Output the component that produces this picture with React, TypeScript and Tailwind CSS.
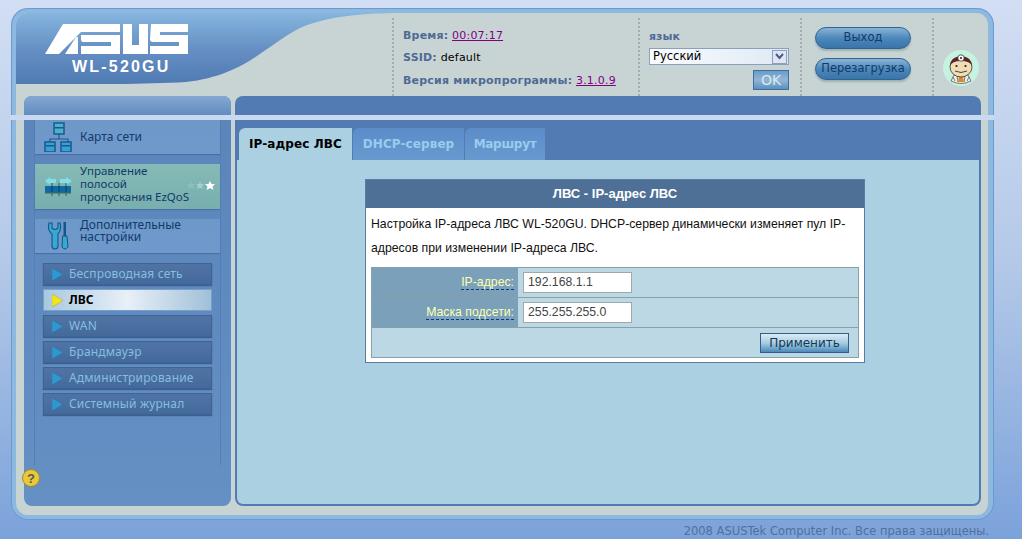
const verdana = "font-['DejaVu_Sans',sans-serif]"

const subMenu = ["Беспроводная сеть", "ЛВС", "WAN", "Брандмауэр", "Администрирование", "Системный журнал"]

const AsusLogo = () => (
  <svg width="143" height="30" viewBox="0 0 143 30" fill="white">
    <path d="M0 30 L18 0 H75 V8 H36 L14 30 Z" />
    <path d="M20 30 L31 13 H33 V30 Z" />
    <path d="M36 11 H75 V30 H36 V22 H66 V18 H38 Q36 18 36 15 Z" />
    <path d="M78 0 H87 V21 H94 V0 H103 V30 H78 Z" />
    <path d="M106 0 H143 V8 H115 V11 H143 V30 H105 V22 H134 V18 H108 Q105 18 105 15 Z" />
  </svg>
)

const Wave = () => (
  <svg className="absolute left-0 top-0" width="400" height="71" viewBox="0 0 400 71">
    <defs>
      <linearGradient id="wave" x1="0" y1="0" x2="0" y2="1">
        <stop offset="0" stopColor="#86b5df" />
        <stop offset="0.5" stopColor="#6690c4" />
        <stop offset="1" stopColor="#4f7ab3" />
      </linearGradient>
    </defs>
    <path d="M0 0 H400 C360 0 320 0 284 15 C250 32 230 62 170 69 C120 72 40 71 0 71 Z" fill="url(#wave)" />
  </svg>
)

const Avatar = () => (
  <svg width="36" height="36" viewBox="0 0 36 36">
    <circle cx="18" cy="18" r="18" fill="#c6f2e0" />
    <path d="M8 31 L11 25 H25 L28 31 Q18 36 8 31 Z" fill="#f0f2e4" stroke="#444" strokeWidth="0.7" />
    <path d="M10 27 L12 31 M14 26 L15 32 M22 26 L21 32 M26 27 L24 31" stroke="#444" strokeWidth="0.7" />
    <path d="M16 26 H20 L21 32 H15 Z" fill="#d98a2c" />
    <ellipse cx="18" cy="17" rx="11" ry="10" fill="#f2dcb4" stroke="#333" strokeWidth="0.8" />
    <path d="M7 16 Q7 7 18 6 Q29 7 29 16 Q27 11 18 11 Q9 11 7 16 Z" fill="#5a2428" />
    <circle cx="18" cy="8" r="3.2" fill="white" stroke="#333" strokeWidth="0.8" />
    <circle cx="18" cy="8" r="1.1" fill="#333" />
    <circle cx="13.5" cy="16" r="1.1" fill="#222" />
    <circle cx="22.5" cy="16" r="1.1" fill="#222" />
    <path d="M12 21 Q18 24 24 21" stroke="#333" strokeWidth="0.9" fill="none" />
  </svg>
)

const NetworkIcon = () => (
  <svg width="30" height="30" viewBox="0 0 30 30">
    <path d="M15 12 V17 M6 22 V17 H24 V22" stroke="#1d5a92" strokeWidth="1.2" fill="none" />
    <rect x="10" y="1" width="10" height="11" fill="#4fb0c8" stroke="#145a96" strokeWidth="1.5" />
    <rect x="10.5" y="5" width="9" height="1.5" fill="#145a96" />
    <rect x="1" y="20" width="10" height="10" fill="#3aa0cc" stroke="#145a96" strokeWidth="1.5" />
    <rect x="1.5" y="23" width="9" height="1.5" fill="#145a96" />
    <rect x="17" y="20" width="10" height="10" fill="#3aa0cc" stroke="#145a96" strokeWidth="1.5" />
    <rect x="17.5" y="23" width="9" height="1.5" fill="#145a96" />
  </svg>
)

const QosIcon = () => (
  <svg width="28" height="20" viewBox="0 0 28 20">
    <path d="M0 4 L5 0 V2 H11 V6 H5 V8 Z M27 4 L21 0 V2 H15 V6 H21 V8 Z" fill="#7fe0ea" />
    <path d="M7 6 V19 M14 6 V19 M21 6 V19" stroke="#3a5a50" strokeWidth="1" />
    <rect x="0" y="9" width="26" height="6" fill="#0f6aa0" />
    <rect x="0" y="15" width="26" height="1.5" fill="#2c6a70" />
    <path d="M7 9 V15 M14 9 V15 M21 9 V15" stroke="#0a3f70" strokeWidth="1" />
  </svg>
)

const ToolsIcon = () => (
  <svg width="22" height="28" viewBox="0 0 22 28">
    <path d="M2 1 Q0 8 5 12 V24 Q5 27 8 27 Q11 27 11 24 V12 Q15 8 13 1 L11 1 V6 Q8 9 5 6 V1 Z" fill="#38a8d0" stroke="#12558c" strokeWidth="1.1" />
    <rect x="16.5" y="0" width="2.5" height="14" fill="#12558c" />
    <path d="M15.5 14 H20 L21 25 Q18 29 15 25 Z" fill="#38a8d0" stroke="#12558c" strokeWidth="1" />
  </svg>
)

const Stars = () => (
  <svg width="28" height="10" viewBox="0 0 28 10" className="absolute right-[5px] top-[17px]">
    <path d="M4 0 L5 3 L8 3 L6 5 L7 8 L4 6.5 L1 8 L2 5 L0 3 L3 3 Z" fill="#8cc0be" />
    <path d="M13 0 L14 3 L17 3 L15 5 L16 8 L13 6.5 L10 8 L11 5 L9 3 L12 3 Z" fill="#a4d0ce" />
    <path d="M23 0 L24.5 3 L28 3 L25.5 5.5 L26.5 9 L23 7 L19.5 9 L20.5 5.5 L18 3 L21.5 3 Z" fill="#ffffff" />
  </svg>
)

const Arrow = ({ active }: { active: boolean }) => (
  <svg width="11" height="13" viewBox="0 0 11 13" className="shrink-0">
    <path d="M0 0 L11 6.5 L0 13 Z" fill={active ? "#f4e41c" : "#2a9ad0"} stroke={active ? "#b8a030" : "#3a6fa8"} strokeWidth="0.5" />
  </svg>
)

const HelpIcon = () => (
  <svg width="18" height="18" viewBox="0 0 18 18">
    <circle cx="9" cy="9" r="8.5" fill="#e8c83c" stroke="#a88a20" />
    <text x="9" y="13.5" textAnchor="middle" fontSize="13" fontWeight="700" fill="#5a5a50" fontFamily="Liberation Sans">?</text>
  </svg>
)

const Sidebar = () => (
  <div className="w-[207px] flex flex-col rounded-t-lg rounded-b-lg relative bg-gradient-to-b from-[#5a84ba] to-[#6490c4]">
    <div className="h-[24px] rounded-t-lg bg-gradient-to-b from-[#84a8d2] to-[#5a84ba]"></div>
    <div className="mx-[10px] h-[345px] border-x border-[#557fb4]">
      <div className="h-[34px] flex items-center bg-gradient-to-b from-[#6c98c8] to-[#7199cb] shadow-[0_1px_1px_#4a70a4]">
        <div className="w-[45px] pl-[9px] flex justify-start"><NetworkIcon /></div>
        <span className="text-[12px] text-[#123a6a]">Карта сети</span>
      </div>
      <div className="mt-[10px] h-[45px] flex items-center relative bg-gradient-to-b from-[#85bab6] to-[#78aeae] shadow-[0_1px_1px_#4a70a4]">
        <div className="w-[45px] pl-[10px] flex justify-start"><QosIcon /></div>
        <span className="text-[11.5px] leading-[13px] text-[#123a6a] whitespace-nowrap -mt-[6px]">Управление<br />полосой<br />пропускания EzQoS</span>
        <Stars />
      </div>
      <div className="mt-[10px] h-[34px] flex items-center bg-gradient-to-b from-[#6c98c8] to-[#7199cb] shadow-[0_1px_1px_#4a70a4]">
        <div className="w-[45px] pl-[12px] flex justify-start"><ToolsIcon /></div>
        <span className="text-[12px] leading-[12px] text-[#123a6a] -mt-[10px]">Дополнительные<br />настройки</span>
      </div>
      <div className="mt-[10px] mx-[8px] flex flex-col gap-[4px]">
        {subMenu.map((item) => {
          const active = item === "ЛВС"
          return (
            <div
              key={item}
              className={
                active
                  ? "h-[22px] flex items-center gap-[6px] pl-[8px] text-[12px] font-bold text-black bg-gradient-to-r from-[#a8c8e0] via-[#e8f0f8] to-[#a0c0d8] border border-[#7aa0c8]"
                  : "h-[22px] flex items-center gap-[6px] pl-[8px] text-[12px] tracking-[0.15px] text-[#86bee0] bg-gradient-to-b from-[#4f74a4] to-[#446a9c] border border-[#3f6494] shadow-[0_1px_1px_#3a5f90]"
              }
            >
              <Arrow active={active} />
              {item}
            </div>
          )
        })}
      </div>
    </div>
    <div className="absolute left-[-2px] top-[373px]"><HelpIcon /></div>
  </div>
)

const MainPanel = () => (
  <div className="flex-1 flex flex-col bg-[#517bb2] rounded-t-lg rounded-b-lg px-[2px] pb-[2px]">
    <div className="h-[32px] shrink-0"></div>
    <div className={`h-[32px] shrink-0 flex items-end pl-[2px] gap-[1px] ${verdana} text-[12px] font-bold`}>
      <div className="h-[32px] w-[113px] flex items-center justify-center bg-[#aad0e2] text-black rounded-tl-md tracking-[0.1px]">IP-адрес ЛВС</div>
      <div className="h-[32px] w-[111px] flex items-center justify-center bg-gradient-to-b from-[#5c8cc8] to-[#689ad0] text-[#9accee] rounded-tl-md tracking-[0.1px]">DHCP-сервер</div>
      <div className="h-[32px] w-[80px] flex items-center justify-center bg-gradient-to-b from-[#5c8cc8] to-[#689ad0] text-[#9accee] rounded-tl-md tracking-[-0.3px]">Маршрут</div>
    </div>
    <div className="flex-1 bg-[#aad0e2] rounded-b-md pt-[19px] font-['Liberation_Sans',sans-serif] text-[12.25px]">
      <div className="w-[500px] ml-[128px] bg-white border border-[#5b7ba2]">
        <div className="h-[28px] bg-[#4f7096] text-white font-bold text-[13px] text-center leading-[28px]">ЛВС - IP-адрес ЛВС</div>
        <p className="px-[5px] pt-[4px] leading-[24px] text-[#111]">
          Настройка IP-адреса ЛВС WL-520GU. DHCP-сервер динамически изменяет пул IP-адресов при изменении IP-адреса ЛВС.
        </p>
        <div className="mx-[5px] mt-[7px] mb-[4px] border border-[#8aa0a8] bg-[#bcd8e4]">
          <div className="h-[30px] flex border-b border-[#8aa0a8]">
            <div className="w-[146px] bg-[#7aa0ba] flex items-center justify-end pr-[4px]">
              <span className="text-[#ffffb0] border-b border-dashed border-[#0a3a7a] leading-[14px]">IP-адрес:</span>
            </div>
            <div className="flex items-center pl-[5px]">
              <div className="w-[109px] h-[21px] bg-white border border-[#a0a8a8] flex items-center pl-[4px] text-[#444]">192.168.1.1</div>
            </div>
          </div>
          <div className="h-[30px] flex border-b border-[#8aa0a8]">
            <div className="w-[146px] bg-[#7aa0ba] flex items-center justify-end pr-[4px]">
              <span className="text-[#ffffb0] border-b border-dashed border-[#0a3a7a] leading-[14px]">Маска подсети:</span>
            </div>
            <div className="flex items-center pl-[5px]">
              <div className="w-[109px] h-[21px] bg-white border border-[#a0a8a8] flex items-center pl-[4px] text-[#444]">255.255.255.0</div>
            </div>
          </div>
          <div className="h-[29px] flex items-center justify-end pr-[9px]">
            <div className={`w-[89px] h-[20px] border border-[#2f5f8f] bg-gradient-to-b from-[#dcecf4] via-[#a8cce0] to-[#4a8ab8] flex items-center justify-center text-[12px] text-[#123a5a] ${verdana}`}>Применить</div>
          </div>
        </div>
      </div>
    </div>
  </div>
)

const Header = () => (
  <div className={`h-[83px] shrink-0 relative flex ${verdana} text-[11px]`}>
    <Wave />
    <div className="w-[376px] relative">
      <div className="absolute left-[29px] top-[11px]"><AsusLogo /></div>
      <div className="absolute left-[56px] top-[45px] font-['Liberation_Sans',sans-serif] text-[16px] font-bold tracking-[2.2px] text-white leading-[18px]">WL-520GU</div>
    </div>
    <div className="w-[246px] border-l-2 border-dotted border-[#a0acae] mt-[5px] pl-[9px] flex flex-col gap-[9px] pt-[11px] relative tracking-[0.2px]">
      <div className="h-[13px] leading-[13px]"><b className="text-[#4f6a94]">Время:</b> <a className="text-[#800080] underline">00:07:17</a></div>
      <div className="h-[13px] leading-[13px]"><b className="text-[#4f6a94]">SSID:</b> <span className="text-black">default</span></div>
      <div className="h-[13px] leading-[13px] mt-[1px]"><b className="text-[#4f6a94]">Версия микропрограммы:</b> <a className="text-[#800080] underline">3.1.0.9</a></div>
    </div>
    <div className="w-[162px] border-l-2 border-dotted border-[#a0acae] mt-[5px] pl-[9px] pt-[12px] flex flex-col">
      <b className="text-[#4f6a94] leading-[13px]">язык</b>
      <div className="mt-[5px] w-[140px] h-[17px] border border-[#8aa0bc] bg-gradient-to-r from-[#fafcfe] to-[#dfe9f5] flex items-center justify-between pl-[3px] pr-[1px] text-[11.5px] text-black">
        <span>Русский</span>
        <span className="w-[15px] h-[14px] bg-[#dfe6f2] border border-[#8aa0bc] flex items-center justify-center">
          <svg width="9" height="7" viewBox="0 0 9 7"><path d="M1 1 L4.5 5 L8 1" stroke="#4a5a88" strokeWidth="2" fill="none" /></svg>
        </span>
      </div>
      <div className="mt-[5px] ml-[104px] w-[36px] h-[20px] border border-[#3f6f9f] bg-gradient-to-b from-[#6a9cc8] via-[#92b6d4] to-[#5a90c0] flex items-center justify-center text-[14px] text-[#dce8f0]">OK</div>
    </div>
    <div className="w-[132px] border-l-2 border-dotted border-[#a0acae] mt-[5px] pl-[13px] pt-[9px] flex flex-col gap-[9px]">
      <div className="w-[96px] h-[22px] rounded-full border border-[#2d6494] bg-gradient-to-b from-[#8ab4d4] via-[#4c88bb] to-[#3a74a8] shadow-[0_2px_2px_#9fb0b4] flex items-center justify-center text-[11.5px] leading-[18px] pb-[2px] text-[#123a6a]">Выход</div>
      <div className="w-[96px] h-[22px] rounded-full border border-[#2d6494] bg-gradient-to-b from-[#8ab4d4] via-[#4c88bb] to-[#3a74a8] shadow-[0_2px_2px_#9fb0b4] flex items-center justify-center text-[11.5px] leading-[18px] pb-[2px] text-[#123a6a]">Перезагрузка</div>
    </div>
    <div className="flex-1 border-l-2 border-dotted border-[#a0acae] mt-[5px] pl-[9px] pt-[32px]">
      <Avatar />
    </div>
  </div>
)

export default function App() {
  return (
    <div className="w-[1022px] h-[539px] overflow-hidden relative bg-gradient-to-b from-[#d2def3] via-[#b3c8e8] to-[#7ba2da] pt-[9px] pl-[12px]">
      <div className="w-[981px] h-[510px] rounded-[16px] border-t-4 border-l-4 border-r-[5px] border-b-[4px] border-[#8db8e0] bg-[#c8d4d4] flex flex-col overflow-hidden shadow-[0_0_0_1px_#6a9ad0]">
        <Header />
        <div className="h-[410px] flex gap-[4px] pl-[8px] pr-[7px]">
          <Sidebar />
          <MainPanel />
        </div>
      </div>
      <div className="absolute left-[10px] top-[115px] w-[984px] h-[5px] bg-[#c9d9ef]"></div>
      <div className={`absolute right-[33px] top-[524px] text-[11.5px] leading-[14px] text-[#50709e] ${verdana}`}>2008 ASUSTek Computer Inc. Все права защищены.</div>
    </div>
  )
}
